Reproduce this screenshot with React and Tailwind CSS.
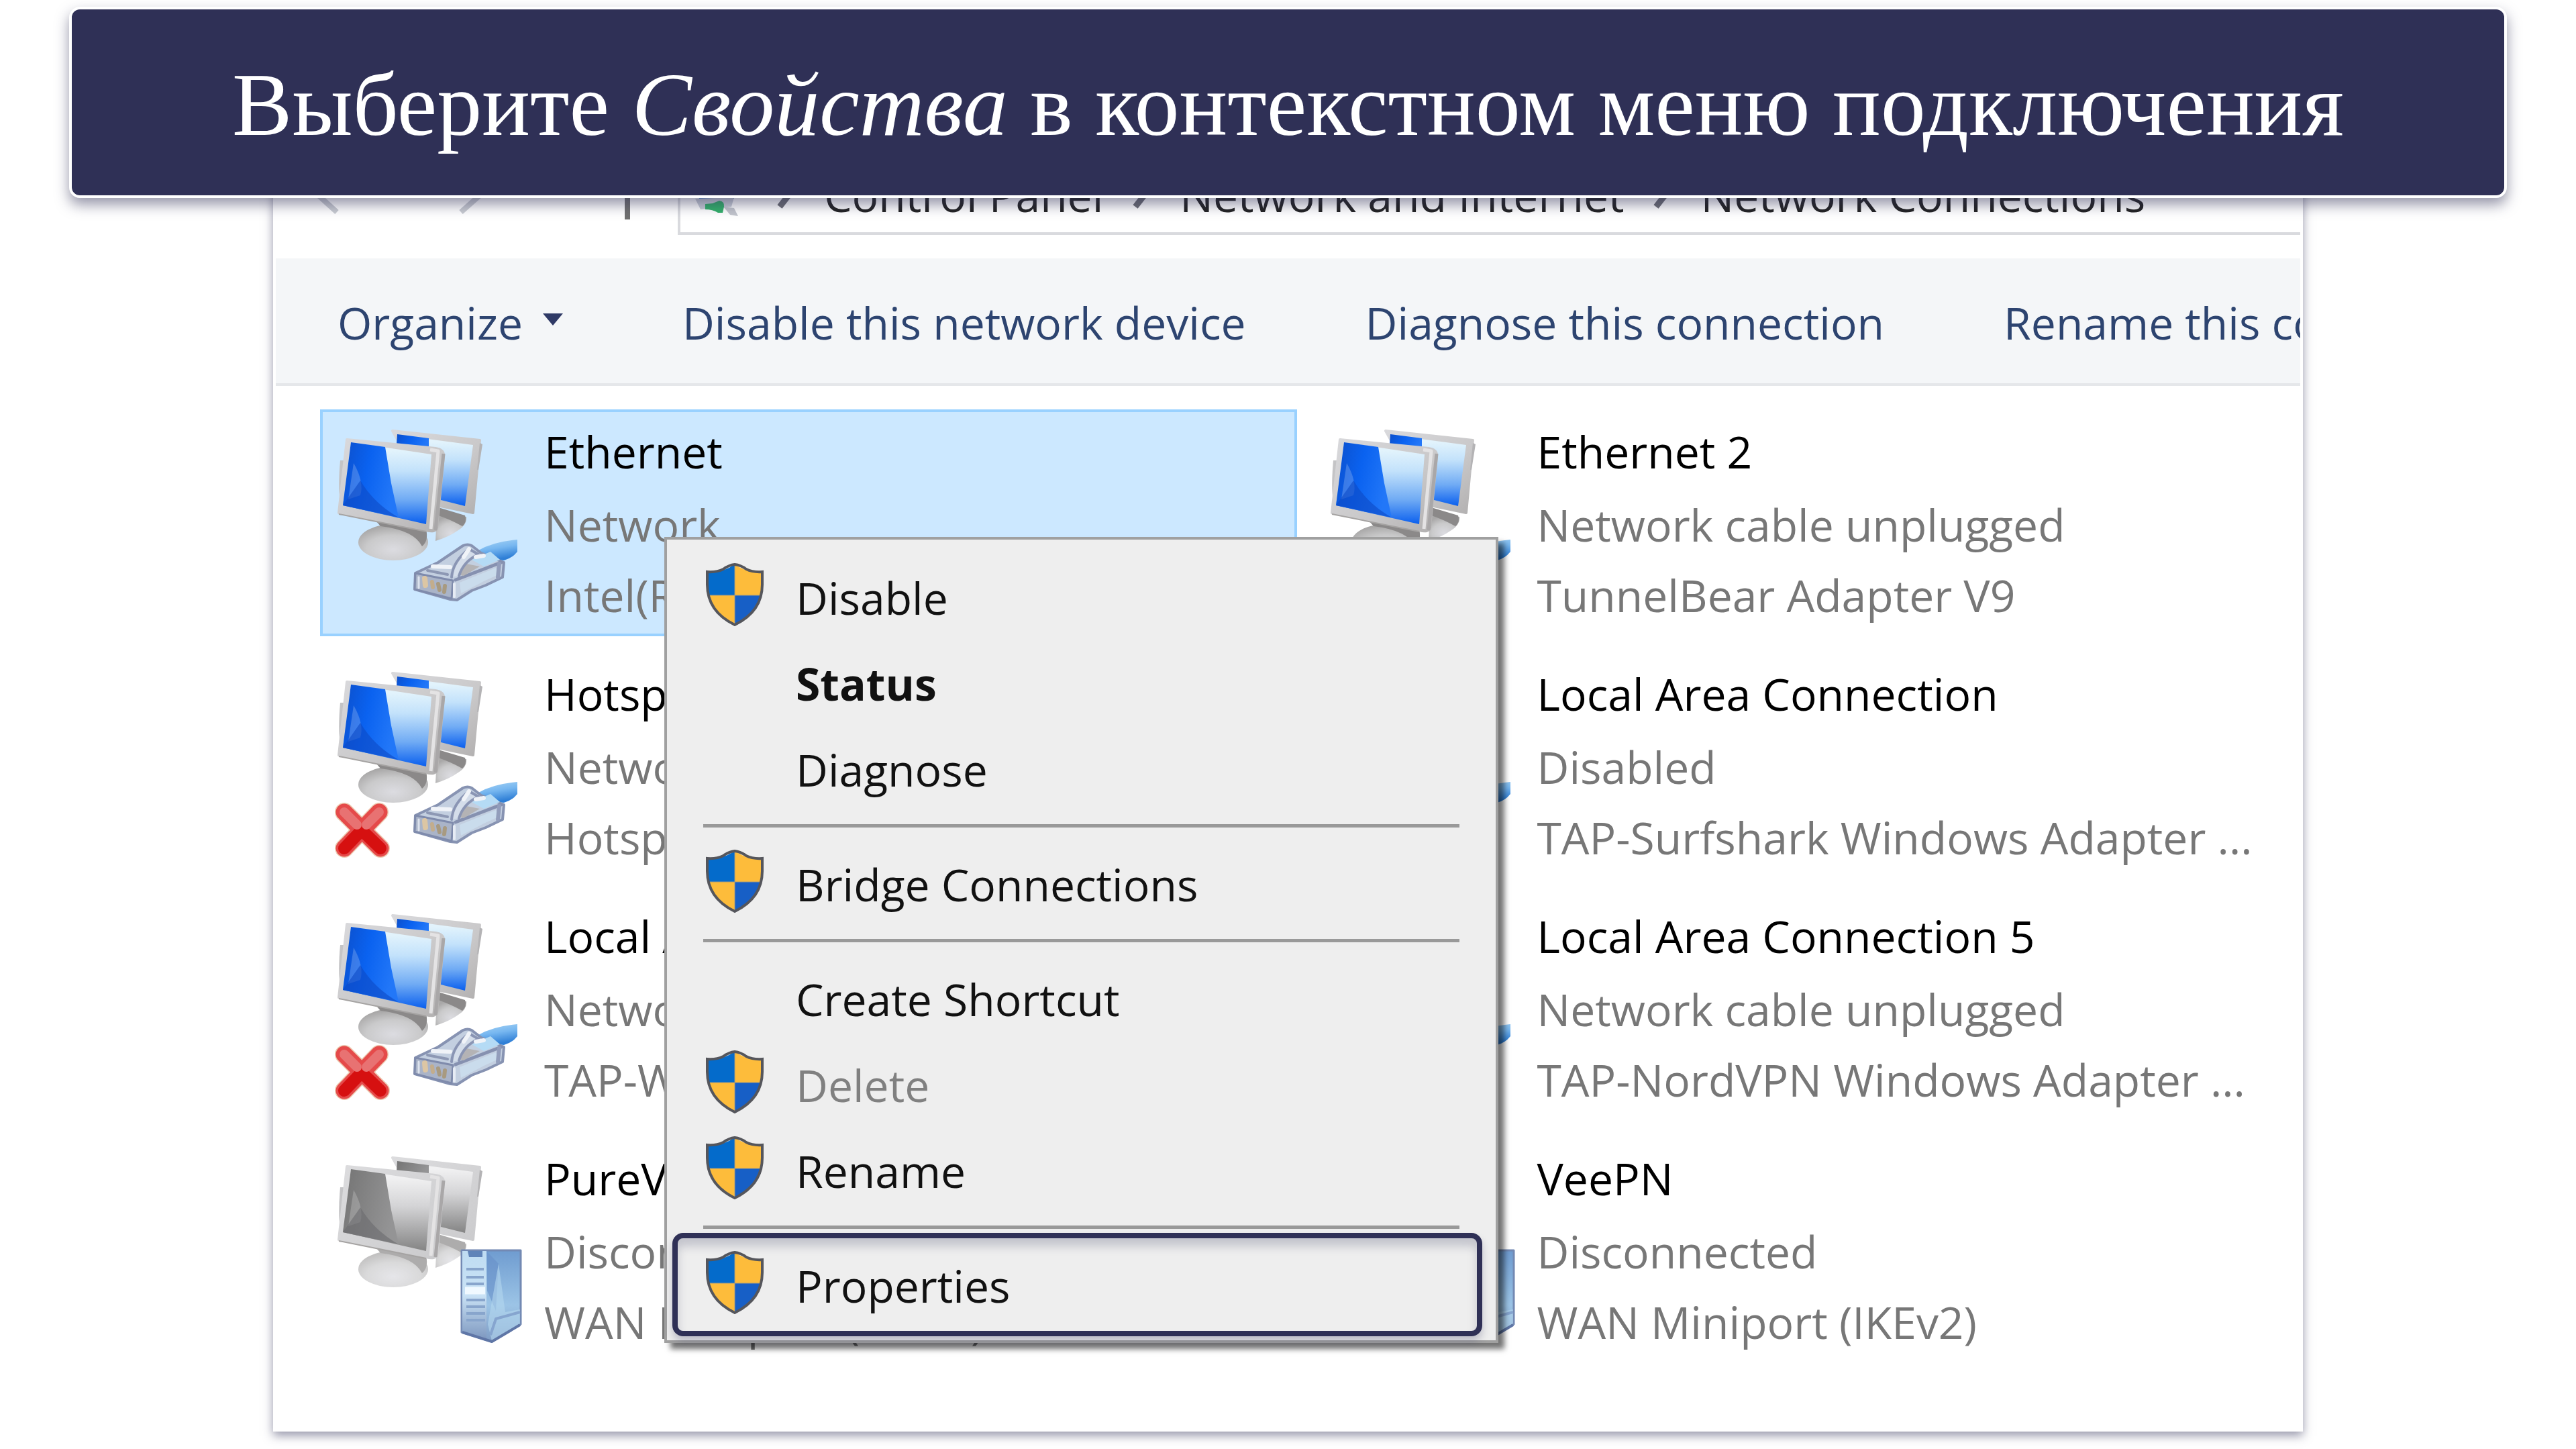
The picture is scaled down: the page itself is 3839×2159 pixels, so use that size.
const connections = [
  { name: 'Ethernet', status: 'Network', device: 'Intel(R)', selected: true },
  { name: 'Ethernet 2', status: 'Network cable unplugged', device: 'TunnelBear Adapter V9' },
  { name: 'Hotspot', status: 'Network', device: 'Hotspot', failed: true },
  { name: 'Local Area Connection', status: 'Disabled', device: 'TAP-Surfshark Windows Adapter ...' },
  { name: 'Local Area', status: 'Network', device: 'TAP-Win', failed: true },
  { name: 'Local Area Connection 5', status: 'Network cable unplugged', device: 'TAP-NordVPN Windows Adapter ...' },
  { name: 'PureVPN', status: 'Disconnected', device: 'WAN Miniport (IKEv2)', wan: true },
  { name: 'VeePN', status: 'Disconnected', device: 'WAN Miniport (IKEv2)', wan: true },
];

const menuGroups = [
  [{ label: 'Disable', shield: true }, { label: 'Status', bold: true }, { label: 'Diagnose' }],
  [{ label: 'Bridge Connections', shield: true }],
  [{ label: 'Create Shortcut' }, { label: 'Delete', shield: true, disabled: true }, { label: 'Rename', shield: true }],
  [{ label: 'Properties', shield: true, highlighted: true }],
];

const path = ['Control Panel', 'Network and Internet', 'Network Connections'];

function Gradients() {
  return (
    <svg className="absolute size-0" aria-hidden="true">
      <defs>
        <linearGradient id="frame" x1="0" y1="0" x2="1" y2="1">
          <stop offset="0" stopColor="#d9d9dc" />
          <stop offset="0.6" stopColor="#c9c8c9" />
          <stop offset="1" stopColor="#b2b0b0" />
        </linearGradient>
        <linearGradient id="frame-off" x1="0" y1="0" x2="1" y2="1">
          <stop offset="0" stopColor="#dcdcde" />
          <stop offset="1" stopColor="#cbcbcd" />
        </linearGradient>
        <linearGradient id="glass" x1="0" y1="0" x2="0" y2="1">
          <stop offset="0.1" stopColor="#e2f3fc" />
          <stop offset="0.35" stopColor="#c3e2fb" />
          <stop offset="0.7" stopColor="#70abf4" />
          <stop offset="1" stopColor="#0a5fee" />
        </linearGradient>
        <linearGradient id="glass-off" x1="0" y1="0" x2="0" y2="1">
          <stop offset="0.1" stopColor="#f1f1f2" />
          <stop offset="0.45" stopColor="#d4d4d6" />
          <stop offset="1" stopColor="#848484" />
        </linearGradient>
        <linearGradient id="deep" x1="0" y1="0" x2="1" y2="0.3">
          <stop offset="0" stopColor="#0c4fcb" />
          <stop offset="0.5" stopColor="#0a62f0" />
          <stop offset="1" stopColor="#2277f8" />
        </linearGradient>
        <linearGradient id="deep-off" x1="0" y1="0" x2="1" y2="0.3">
          <stop offset="0" stopColor="#747474" />
          <stop offset="1" stopColor="#949495" />
        </linearGradient>
        <radialGradient id="base" cx="0.5" cy="0.7" r="0.65">
          <stop offset="0" stopColor="#dcdce1" />
          <stop offset="0.6" stopColor="#cacacb" />
          <stop offset="1" stopColor="#a9a8a8" />
        </radialGradient>
        <linearGradient id="cord" x1="0" y1="0" x2="0.3" y2="1">
          <stop offset="0" stopColor="#a9d4f4" />
          <stop offset="0.5" stopColor="#77b7f0" />
          <stop offset="1" stopColor="#2f7fd6" />
        </linearGradient>
        <linearGradient id="tower" x1="0" y1="0" x2="0" y2="1">
          <stop offset="0" stopColor="#6f9cd0" />
          <stop offset="0.6" stopColor="#9cc4e6" />
          <stop offset="1" stopColor="#7f9cc4" />
        </linearGradient>
        <linearGradient id="tower-front" x1="0" y1="0" x2="0" y2="1">
          <stop offset="0" stopColor="#bfdcf2" />
          <stop offset="0.5" stopColor="#c9e2f5" />
          <stop offset="1" stopColor="#7d97bf" />
        </linearGradient>
      </defs>
    </svg>
  );
}

function Monitors({ off }) {
  const frame = off ? 'url(#frame-off)' : 'url(#frame)';
  const glass = off ? 'url(#glass-off)' : 'url(#glass)';
  const deep = off ? 'url(#deep-off)' : 'url(#deep)';
  return (
    <g strokeLinejoin="round">
      <g opacity={off ? 0.7 : 1}>
        <path d="M174 158 L218 160 Q219 172 206 180 Q192 190 172 196 Z" fill="url(#base)" />
        <path d="M176 146 L216 158 Q219 168 212 174 Q194 164 176 158 Z" fill="#8b8989" />
      </g>
      <path d="M108 32 L238 46 L228 154 L170 142 Z" fill={frame} stroke={frame} strokeWidth="4" />
      <path d="M238 50 L242 52 L236 90 L234 90 Z" fill="#b4b3b5" />
      <path d="M115 38 L228 53 L216 144 L176 134 Z" fill={glass} />
      <path d="M115 37 L162 43 L162 60 L114 52 Z" fill={deep} />
      <g opacity={off ? 0.7 : 1}>
        <ellipse cx="109" cy="198" rx="52" ry="27" fill="url(#base)" />
        <path d="M78 160 L158 178 Q162 196 152 204 Q140 180 90 174 Z" fill="#8b8989" />
      </g>
      <path d="M30 76 Q27 110 29 130 L34 130 L36 76 Z" fill="#c4c4c6" />
      <path d="M40 45 L172 58 Q185 60 184 70 L174 176 Q172 184 158 180 L28 154 Z" fill={frame} stroke={frame} strokeWidth="4" />
      <path d="M184 66 L172 180" stroke="#a9a7a8" strokeWidth="5" fill="none" />
      <path d="M164 60 L176 62 L165 178" stroke="#e4e3e4" strokeWidth="5" fill="none" />
      <path d="M46 49 L166 67 L158 171 L34 143 Z" fill={glass} />
      <path d="M46 49 L97 56 L106 110 L117 161 L34 143 Z" fill={deep} />
      <path d="M50 80 Q66 108 60 128 L42 134 Z" fill="#fff" opacity="0.2" />
      <path d="M34 143 L60 106 Q80 140 117 161 Z" fill={off ? '#6b6b6e' : '#0d4ac4'} opacity="0.6" />
      <path d="M28 156 L158 182" stroke="#a5a3a2" strokeWidth="2" fill="none" />
    </g>
  );
}

function Plug() {
  return (
    <g strokeLinejoin="round" strokeLinecap="round">
      <path d="M236 210 Q258 197 294 194 L294 212 Q286 222 274 225 L244 222 Z" fill="url(#cord)" />
      <path d="M142 244 L176 228 L213 203 Q220 200 226 203 L240 214 L274 228 L272 250 L247 262 L226 270 L204 284 L194 283 L141 268 Z" fill="#c3cfe0" stroke="#8793b2" strokeWidth="4" />
      <path d="M142 244 L198 255 L196 282 L141 268 Z" fill="#aab4c8" stroke="#7f8bac" strokeWidth="3" />
      <path d="M208 258 L262 236 L266 246 L244 256 L210 274 Z" fill="#cadcec" />
      <path d="M202 254 L270 228" stroke="#8691b0" strokeWidth="5" />
      <path d="M267 230 L265 250" stroke="#929dbb" strokeWidth="6" />
      <path d="M226 224 L254 212 L268 224 L244 234 Z" fill="#b5dbf5" />
      <path d="M204 246 L218 230 L238 234 L214 248 Z" fill="#b4b3b5" />
      <path d="M196 250 Q198 226 222 208 L236 216 Q214 226 207 248" fill="#d4ddea" stroke="#8a95b4" strokeWidth="4" />
      <path d="M222 208 L214 220 M168 234 L194 235 M232 220 L244 218" stroke="#f0f3f8" strokeWidth="6" />
      <path d="M160 240 L190 246" stroke="#8d98b4" strokeWidth="4" />
      <path d="M156 252 L157 262" stroke="#dcc6a4" strokeWidth="8" />
      <path d="M167 257 L168 265" stroke="#c3ad8c" strokeWidth="6" />
      <path d="M176 260 L178 269 M186 263 L185 272" stroke="#a89a80" strokeWidth="6" />
      <path d="M147 250 L147 266" stroke="#dde3ed" strokeWidth="3" />
      <path d="M200 260 L200 279" stroke="#e6ebf4" strokeWidth="4" />
    </g>
  );
}

function Tower() {
  return (
    <g strokeLinejoin="round">
      <path d="M211 170 L299 170 L299 280 L256 306 L211 292 Z" fill="url(#tower)" stroke="#7389b3" strokeWidth="3" />
      <path d="M212 171 L248 171 L248 303 L212 291 Z" fill="url(#tower-front)" />
      <path d="M220 171 H242 V180 H222 Z" fill="#5f83b8" />
      <path d="M218 198 H244 M218 210 H244 M218 220 H244 M218 244 H246 M218 254 H246 M218 264 H246 M218 274 H246" stroke="#88a5cc" strokeWidth="4" />
      <path d="M216 230 H246" stroke="#f0f9ff" strokeWidth="11" />
      <path d="M249 172 L266 190 L262 260 L249 230 Z" fill="#6890c8" opacity="0.6" />
      <path d="M266 190 L276 262 L298 258 L298 280 L256 305 L250 280 Z" fill="#b4d7ef" opacity="0.6" />
      <path d="M254 296 L262 272 L298 262" stroke="#86a5cf" strokeWidth="4" fill="none" />
      <path d="M212 292 L256 306 L298 281" stroke="#5f76a6" strokeWidth="4" fill="none" />
    </g>
  );
}

function FailedMark() {
  return (
    <g strokeLinecap="round">
      <path d="M36 239 L90 293 M88 239 L36 293" stroke="#ecc9b0" strokeWidth="28" />
      <path d="M36 239 L90 293 M88 239 L36 293" stroke="#e54a4a" strokeWidth="25" />
      <path d="M62 266 L90 293 M62 266 L36 293" stroke="#d61010" strokeWidth="18" />
      <path d="M36 239 L55 258 M88 239 L69 258" stroke="#e87272" strokeWidth="14" />
    </g>
  );
}

function ConnectionIcon({ wan, failed }) {
  return (
    <svg viewBox="4 4 310 330" className="h-[330px] w-[310px] shrink-0" aria-hidden="true">
      <Monitors off={wan} />
      {wan ? <Tower /> : <Plug />}
      {failed && <FailedMark />}
    </svg>
  );
}

function Connection({ name, status, device, selected, failed, wan }) {
  return (
    <li className={selected ? 'flex border-4 border-[#99d1ff] bg-[#cce8ff]' : 'flex border-4 border-transparent'}>
      <ConnectionIcon wan={wan} failed={failed} />
      <div className="ml-5 mt-1.5 min-w-0 whitespace-nowrap text-[66px] leading-[105px] text-[#777]">
        <h2 className="mb-1 text-black">{name}</h2>
        <p>{status}</p>
        <p>{device}</p>
      </div>
    </li>
  );
}

function Shield() {
  return (
    <svg viewBox="0 0 86 94" className="h-[94px] w-[86px]" aria-hidden="true">
      <path d="M43 2 V48 H3 Q2 30 2 13 Q22 16 43 2 Z" fill="#046bcb" />
      <path d="M43 2 V48 H83 Q84 30 84 13 Q64 16 43 2 Z" fill="#fdbc3b" />
      <path d="M43 48 H3 Q10 76 43 92 Z" fill="#fdbc3b" />
      <path d="M43 48 H83 Q76 76 43 92 Z" fill="#175fc6" />
      <path d="M43 2 V92 M3 48 H83" stroke="#a39a80" strokeWidth="1" />
      <path d="M43 2 Q52 3 60 9 Q70 14 84 13 V32 Q84 72 43 92 Q2 72 2 32 V13 Q16 14 26 9 Q34 3 43 2 Z" fill="none" stroke="#55565c" strokeWidth="4" />
    </svg>
  );
}

function MenuItem({ label, shield, bold, disabled, highlighted }) {
  return (
    <button
      type="button"
      role="menuitem"
      disabled={disabled}
      className="relative flex h-32 w-full items-center text-left text-[66px] text-[#111] disabled:text-[#808080]"
    >
      <span className="-mt-2 ml-[58px] mr-12 w-[86px] shrink-0">{shield && <Shield />}</span>
      <span className={bold ? 'font-bold' : ''}>{label}</span>
      {highlighted && (
        <span className="absolute -bottom-3 -top-3.5 left-2 right-5 rounded-2xl border-8 border-[#2f3056] shadow-[0_8px_12px_rgba(47,48,86,0.25),inset_0_12px_14px_rgba(47,48,86,0.22)]" />
      )}
    </button>
  );
}

function ContextMenu() {
  return (
    <div
      role="menu"
      className="absolute left-[579px] top-[600px] w-[1243px] border-4 border-[#a0a0a0] bg-[#eee] pb-[18px] pt-[22px] shadow-[9px_9px_8px_rgba(0,0,0,0.55)]"
    >
      {menuGroups.map((group, i) => (
        <div key={i}>
          {i > 0 && <hr className="mx-[54px] mb-5 mt-[18px] border-t-[5px] border-[#999]" />}
          {group.map((item) => (
            <MenuItem key={item.label} {...item} />
          ))}
        </div>
      ))}
    </div>
  );
}

function AddressBar() {
  return (
    <nav className="flex h-[185px] items-end pb-[35px]">
      <svg viewBox="0 0 599 120" className="h-[120px] w-[599px] shrink-0" fill="none" aria-hidden="true">
        <path d="M124 20 L58 56 L91 86" stroke="#c9ccd2" strokeWidth="8" />
        <path d="M276 86 L312 54 L250 20" stroke="#c9ccd2" strokeWidth="8" />
        <path d="M524 20 V97" stroke="#707070" strokeWidth="8" />
      </svg>
      <div className="flex h-[120px] flex-1 items-center overflow-hidden whitespace-nowrap border-4 border-r-0 border-[#d9dade] text-[66px] text-[#222]">
        <svg viewBox="0 0 80 80" className="ml-5 size-20 shrink-0" aria-hidden="true">
          <path d="M4 20 L60 20 L60 46 L8 46 Z" fill="#3f7fd8" />
          <path d="M2 46 L60 44 L56 58 L10 62 Z" fill="#c9ced8" />
          <path d="M44 58 L60 60 L66 72 L54 70 Z" fill="#c3c6cd" />
          <path d="M17 54 L28 53 L38 49 Q46 50 45 58 L43 67 L36 67 Q28 62 17 62 Z" fill="#33b06a" />
        </svg>
        {path.map((part) => (
          <span key={part} className="flex items-center">
            <svg viewBox="0 0 114 56" className="h-14 w-[114px]" fill="none" aria-hidden="true">
              <path d="M46 12 L62 28 L48 46" stroke="#6c6d74" strokeWidth="9" />
            </svg>
            {part}
          </span>
        ))}
      </div>
    </nav>
  );
}

function Toolbar() {
  return (
    <div className="flex h-[190px] items-center gap-[178px] overflow-hidden whitespace-nowrap border-b-4 border-[#e5e7ea] bg-[#f4f6f8] pl-[92px] pt-1 text-[66px] text-[#2d4470]">
      <button type="button" className="flex items-center gap-[30px]">
        Organize
        <svg viewBox="0 0 30 18" className="mb-2 h-[18px] w-[30px]" aria-hidden="true">
          <path d="M0 0 H30 L15 18 Z" fill="#2f3a66" />
        </svg>
      </button>
      <button type="button">Disable this network device</button>
      <button type="button">Diagnose this connection</button>
      <button type="button">Rename this connection</button>
    </div>
  );
}

export default function App() {
  return (
    <div className="bg-white pb-[26px] pt-2.5 font-['Open_Sans',sans-serif]">
      <Gradients />
      <header className="relative z-10 mx-[103px] flex h-[285px] items-center justify-center rounded-2xl border-4 border-white bg-[#2f3056] pt-2 shadow-[0_10px_20px_rgba(47,48,86,0.5)]">
        <h1 className="whitespace-nowrap font-['Liberation_Serif',serif] text-[134px] text-white">
          Выберите <em>Свойства</em> в контекстном меню подключения
        </h1>
      </header>
      <main className="relative mx-[407px] -mt-[95px] border-x-4 border-b-4 border-white bg-white shadow-[0_6px_14px_rgba(47,48,86,0.5)]">
        <AddressBar />
        <Toolbar />
        <ul className="grid grid-cols-2 gap-x-6 gap-y-[23px] pb-[98px] pl-[66px] pr-4 pt-[35px]">
          {connections.map((connection) => (
            <Connection key={connection.name} {...connection} />
          ))}
        </ul>
        <ContextMenu />
      </main>
    </div>
  );
}
